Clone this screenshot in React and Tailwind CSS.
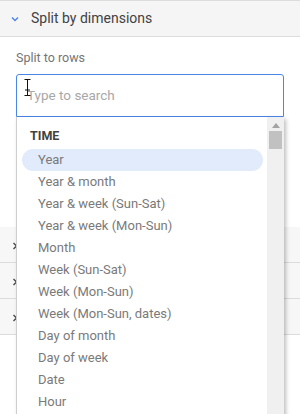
import React from "react";

const items = [
  "Year",
  "Year & month",
  "Year & week (Sun-Sat)",
  "Year & week (Mon-Sun)",
  "Month",
  "Week (Sun-Sat)",
  "Week (Mon-Sun)",
  "Week (Mon-Sun, dates)",
  "Day of month",
  "Day of week",
  "Date",
  "Hour",
];

const ChevronDown = () => (
  <svg width="8" height="6" viewBox="0 0 8 6" className="shrink-0">
    <path d="M1 1.5 L4 4.5 L7 1.5" fill="none" stroke="#4a86e8" strokeWidth="1.4" />
  </svg>
);

const ChevronRight = () => (
  <svg width="6" height="8" viewBox="0 0 6 8" className="shrink-0">
    <path d="M1.5 1 L4.5 4 L1.5 7" fill="none" stroke="#444" strokeWidth="1.3" />
  </svg>
);

const CollapsedRow = () => (
  <div className="h-[36px] flex items-center pl-[12px] pt-[3px] bg-[#f7f7f7] border-b border-[#dcdcdc]">
    <ChevronRight />
  </div>
);

export default function App() {
  return (
    <div
      className="w-[300px] h-[414px] overflow-hidden bg-white relative"
      style={{ fontFamily: "Roboto, 'Liberation Sans', sans-serif" }}
    >
      {/* header */}
      <div className="h-[37px] bg-[#f5f5f5] border-t border-b border-[#dcdcdc] flex items-center gap-[12px] pl-[11px]">
        <ChevronDown />
        <span className="text-[14px] text-[#424242]">Split by dimensions</span>
      </div>

      <div className="px-4 pt-[13px] h-[190px]">
        <div className="text-[12.5px] text-[#757575] leading-[16px]">Split to rows</div>
        <div className="relative mt-[8px]">
          <div className="h-[43px] border border-[#4a86e8] rounded-t-[3px] flex items-center pl-[10px]">
            <span className="text-[13.5px] text-[#a8a8a8]">Type to search</span>
          </div>
          {/* mouse text cursor */}
          <svg
            width="7"
            height="17"
            viewBox="0 0 7 17"
            className="absolute left-[8px] top-[5px]"
          >
            <path d="M0.5 0.5 H6.5 M3.5 0.5 V16.5 M0.5 16.5 H6.5 M1 11 H6" fill="none" stroke="#111" strokeWidth="1" />
          </svg>
          {/* dropdown */}
          <div className="absolute left-0 top-[43px] w-[268px] h-[320px] bg-white border-l border-[#cfcfcf] shadow-[2px_2px_4px_rgba(0,0,0,0.25)] flex z-10">
            <div className="flex-1 pl-[5px] pr-[4px] pt-[11px]">
              <div className="text-[12.5px] font-bold text-[#424242] pl-[8px] leading-[16px] mb-[5px]">TIME</div>
              {items.map((it, i) => (
                <div
                  key={it}
                  className={`h-[22px] flex items-center pl-[16px] rounded-full text-[13px] text-[#7a7a7a] ${
                    i === 0 ? "bg-[#e1ebfc]" : ""
                  }`}
                >
                  {it}
                </div>
              ))}
            </div>
            <div className="w-[17px] bg-[#f0f0f0] flex flex-col items-center pt-[6px]">
              <svg width="8" height="5" viewBox="0 0 8 5">
                <path d="M0 5 L4 0 L8 5 Z" fill="#a3a3a3" />
              </svg>
              <div className="w-[13px] h-[18px] bg-[#c1c1c1] mt-[3px]" />
            </div>
          </div>
        </div>
      </div>

      <CollapsedRow />
      <CollapsedRow />
      <CollapsedRow />
    </div>
  );
}
